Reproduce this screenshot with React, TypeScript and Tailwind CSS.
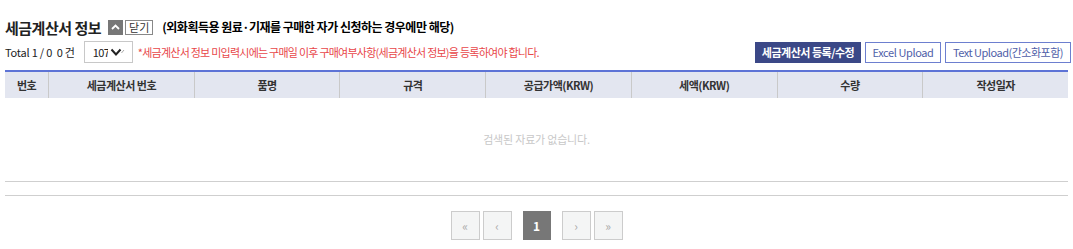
import React from 'react';

const columns = ['번호', '세금계산서 번호', '품명', '규격', '공급가액(KRW)', '세액(KRW)', '수량', '작성일자'];

export default function App() {
  return (
    <div className="w-[1073px] h-[249px] bg-white text-[#333] overflow-hidden" style={{ fontFamily: '"Noto Sans CJK KR", "Liberation Sans", sans-serif' }}>
      <div className="px-[5px]">
        {/* title */}
        <div className="flex items-center h-[16px] mt-[19px]">
          <h2 className="text-[15px] font-bold leading-none text-[#222] tracking-[-0.5px]">세금계산서 정보</h2>
          <span className="ml-[7px] w-[15px] h-[15px] bg-[#777] flex items-center justify-center">
            <svg width="9" height="6" viewBox="0 0 9 6">
              <path d="M1 5 L4.5 1.5 L8 5" stroke="#fff" strokeWidth="1.8" fill="none" />
            </svg>
          </span>
          <button className="ml-[2px] h-[15px] px-[3px] border border-[#888] text-[11px] leading-none text-[#333]">닫기</button>
          <span className="ml-[9px] text-[12px] font-bold text-black tracking-[-0.5px]">(외화획득용 원료·기재를 구매한 자가 신청하는 경우에만 해당)</span>
        </div>

        {/* toolbar */}
        <div className="flex items-center mt-[6px] h-[22px] -mr-[3px]">
          <span className="text-[11px] tracking-[-0.2px] text-[#222]">Total 1 / 0 &nbsp;0 건</span>
          <div className="ml-[9px] w-[49px] h-[22px] border border-[#c8c8c8] flex items-center pl-[8px] overflow-hidden">
            <span className="text-[11px] text-[#222] tracking-[-0.6px] w-[15px] overflow-hidden whitespace-nowrap">107</span>
            <svg width="16" height="9" viewBox="0 0 16 9" className="ml-[2px]">
              <path d="M1.5 1.5 L6 6.5 L10.5 1.5" stroke="#222" strokeWidth="2" fill="none" />
              <path d="M11.5 5 L14 2" stroke="#aaa" strokeWidth="1" fill="none" />
            </svg>
          </div>
          <span className="ml-[5px] text-[11px] text-[#e8474a] tracking-[-0.75px]">*세금계산서 정보 미입력시에는 구매일 이후 구매여부사항(세금계산서 정보)을 등록하여야 합니다.</span>
          <div className="ml-auto flex items-center gap-[4px]">
            <button className="h-[21px] w-[106px] bg-[#3b4887] text-white text-[11px] font-bold tracking-[-0.5px]">세금계산서 등록/수정</button>
            <button className="h-[21px] w-[76px] border border-[#6d7fcf] text-[#4f5ea8] text-[11px] tracking-[-0.4px]">Excel Upload</button>
            <button className="h-[21px] w-[126px] border border-[#6d7fcf] text-[#4f5ea8] text-[11px] tracking-[-0.5px]">Text Upload(간소화포함)</button>
          </div>
        </div>

        {/* table */}
        <div className="mt-[7px]">
          <div className="grid grid-cols-[43px_repeat(7,1fr)] border-t-2 border-[#5d73d6] bg-[#e3e6f0] h-[28px]">
            {columns.map((c, i) => (
              <div key={c} className={`flex items-center justify-center text-[11px] font-bold text-[#333] tracking-[-0.5px] ${i > 0 ? 'border-l border-[#c9c9c9]' : ''}`}>{c}</div>
            ))}
          </div>
          <div className="h-[84px] flex items-center justify-center border-b border-[#cfcfcf]">
            <span className="text-[11px] text-[#c8c8c8] tracking-[-0.2px]">검색된 자료가 없습니다.</span>
          </div>
          <div className="h-[14px] border-b border-[#cfcfcf]" />
        </div>

        {/* pagination */}
        <div className="flex justify-center items-center mt-[15px]">
          <div className="flex items-center gap-[3px]">
            <button className="w-[29px] h-[29px] border border-[#cccccc] bg-[#f4f5f5] text-[#aaa] text-[12px]">«</button>
            <button className="w-[29px] h-[29px] border border-[#cccccc] bg-[#f4f5f5] text-[#aaa] text-[12px]">‹</button>
          </div>
          <button className="mx-[11px] w-[28px] h-[29px] bg-[#777] text-white text-[12px] font-bold">1</button>
          <div className="flex items-center gap-[3px]">
            <button className="w-[29px] h-[29px] border border-[#cccccc] bg-[#f4f5f5] text-[#aaa] text-[12px]">›</button>
            <button className="w-[29px] h-[29px] border border-[#cccccc] bg-[#f4f5f5] text-[#aaa] text-[12px]">»</button>
          </div>
        </div>
      </div>
    </div>
  );
}
